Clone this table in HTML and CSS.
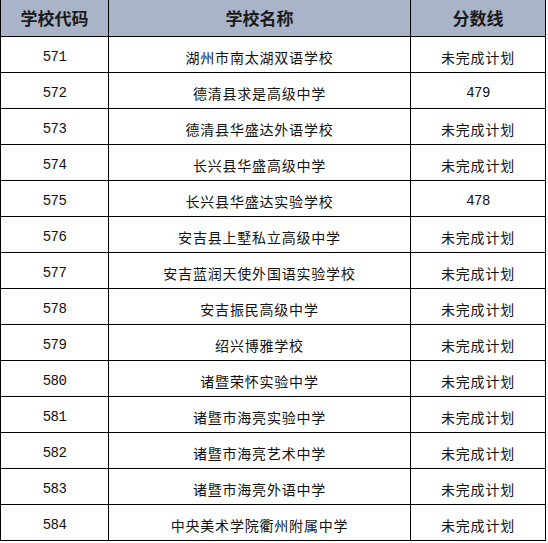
FILE: index.html
```html
<!DOCTYPE html>
<html lang="zh">
<head>
<meta charset="utf-8">
<link rel="stylesheet" href="styles.css">
</head>
<body>
<table class="scores">
  <colgroup>
    <col class="c-code">
    <col class="c-name">
    <col class="c-score">
  </colgroup>
  <thead>
    <tr><th>学校代码</th><th>学校名称</th><th>分数线</th></tr>
  </thead>
  <tbody>
    <tr><td class="num">571</td><td class="cn">湖州市南太湖双语学校</td><td class="cn">未完成计划</td></tr>
    <tr><td class="num">572</td><td class="cn">德清县求是高级中学</td><td class="num">479</td></tr>
    <tr><td class="num">573</td><td class="cn">德清县华盛达外语学校</td><td class="cn">未完成计划</td></tr>
    <tr><td class="num">574</td><td class="cn">长兴县华盛高级中学</td><td class="cn">未完成计划</td></tr>
    <tr><td class="num">575</td><td class="cn">长兴县华盛达实验学校</td><td class="num">478</td></tr>
    <tr><td class="num">576</td><td class="cn">安吉县上墅私立高级中学</td><td class="cn">未完成计划</td></tr>
    <tr><td class="num">577</td><td class="cn">安吉蓝润天使外国语实验学校</td><td class="cn">未完成计划</td></tr>
    <tr><td class="num">578</td><td class="cn">安吉振民高级中学</td><td class="cn">未完成计划</td></tr>
    <tr><td class="num">579</td><td class="cn">绍兴博雅学校</td><td class="cn">未完成计划</td></tr>
    <tr><td class="num">580</td><td class="cn">诸暨荣怀实验中学</td><td class="cn">未完成计划</td></tr>
    <tr><td class="num">581</td><td class="cn">诸暨市海亮实验中学</td><td class="cn">未完成计划</td></tr>
    <tr><td class="num">582</td><td class="cn">诸暨市海亮艺术中学</td><td class="cn">未完成计划</td></tr>
    <tr><td class="num">583</td><td class="cn">诸暨市海亮外语中学</td><td class="cn">未完成计划</td></tr>
    <tr><td class="num">584</td><td class="cn">中央美术学院衢州附属中学</td><td class="cn">未完成计划</td></tr>
  </tbody>
</table>
</body>
</html>
```
FILE: styles.css
```css
html, body {
  margin: 0;
  padding: 0;
  background: #ffffff;
}
.scores {
  margin-top: -1px;
  width: 546px;
  table-layout: fixed;
  border-collapse: separate;
  border-spacing: 1px;
  background: #000000;
  font-family: "Noto Sans CJK SC", sans-serif;
  color: #111111;
}
.c-code { width: 107px; }
.c-name { width: 301px; }
.c-score { width: 134px; }
.scores th {
  background: #a9b4c8;
  height: 36px;
  padding: 0;
  font-size: 17px;
  font-weight: 700;
  line-height: 20px;
  color: #1a1a1a;
  text-align: center;
  vertical-align: middle;
}
.scores td {
  background: #ffffff;
  height: 31px;
  padding: 4px 0 0 0;
  text-align: center;
  vertical-align: middle;
  line-height: 18px;
}
.scores td.cn {
  font-size: 14px;
  letter-spacing: 0.8px;
}
.scores td.num {
  font-family: "Liberation Mono", monospace;
  font-size: 14px;
  letter-spacing: -0.6px;
}
```
